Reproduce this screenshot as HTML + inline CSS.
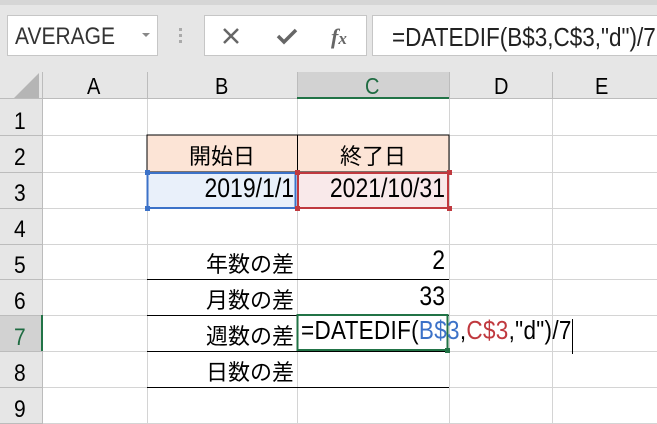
<!DOCTYPE html><html><head><meta charset="utf-8"><style>
*{margin:0;padding:0;box-sizing:border-box}
body{width:657px;height:424px;overflow:hidden;background:#fff;font-family:"Liberation Sans","Noto Sans CJK JP",sans-serif;position:relative}
.a{position:absolute}
.t{white-space:nowrap}
.n{transform:scaleY(1.15)}
.r{text-align:right}
</style></head><body>
<div class="a" style="left:0;top:0;width:657px;height:72px;background:#e6e6e6"></div>
<div class="a" style="left:0;top:0;width:657px;height:5px;background:#d6d6d6"></div>
<div class="a" style="left:7px;top:15px;width:151px;height:41px;background:#fff;border:1px solid #c6c6c6"></div>
<div class="a t n" style="left:15px;top:25px;font-size:21px;color:#333">AVERAGE</div>
<div class="a" style="left:142px;top:33px;border-left:4px solid transparent;border-right:4px solid transparent;border-top:4px solid #888"></div>
<div class="a" style="left:179px;top:28px;width:3px;height:3px;background:#aaa;box-shadow:0 6px #aaa,0 12px #aaa"></div>
<div class="a" style="left:204px;top:15px;width:163px;height:41px;background:#fff;border:1px solid #c6c6c6"></div>
<svg class="a" style="left:222px;top:27px" width="18" height="18"><path d="M2 2L16 16M16 2L2 16" stroke="#666" stroke-width="2.5"/></svg>
<svg class="a" style="left:276px;top:27px" width="22" height="18"><path d="M2 9L8 15L20 3" stroke="#666" stroke-width="3.5" fill="none"/></svg>
<div class="a t" style="left:331px;top:24px;font-family:'Liberation Serif',serif;font-style:italic;font-size:22px;color:#666;font-weight:bold">f<span style="font-size:17px">x</span></div>
<div class="a" style="left:372px;top:15px;width:290px;height:41px;background:#fff;border:1px solid #c6c6c6"></div>
<div class="a t n" style="left:392px;top:25px;font-size:22.5px;color:#222">=DATEDIF(B$3,C$3,"d")/7</div>

<svg class="a" style="left:0;top:72px" width="657" height="352">
<rect x="0" y="0" width="657" height="27" fill="#e6e6e6"/>
<rect x="0" y="27" width="42" height="325" fill="#e6e6e6"/>
<rect x="297" y="0" width="152" height="27" fill="#d2d2d2"/>
<rect x="0" y="243" width="42" height="36" fill="#d2d2d2"/>
<path d="M39 7L39 32L14 32Z" fill="#b5b5b5" transform="translate(0,-6)"/>
<g stroke="#d4d4d4" stroke-width="1">
<path d="M147.5 27V352M297.5 27V352M449.5 27V352M552.5 27V352"/>
<path d="M42 63.5H657M42 100.5H657M42 136.5H657M42 172.5H657M42 207.5H657M42 243.5H657M42 279.5H657M42 315.5H657M42 351.5H657"/>
</g>
<g stroke="#bcbcbc"><path d="M147.5 0V27M297.5 0V27M449.5 0V27M552.5 0V27M42.5 0V352M0 26.5H657"/>
<path d="M0 63.5H42M0 100.5H42M0 136.5H42M0 172.5H42M0 207.5H42M0 243.5H42M0 279.5H42M0 315.5H42M0 351.5H42"/></g>
<rect x="297" y="25" width="152" height="2" fill="#217346"/>
<rect x="41" y="243" width="2" height="36" fill="#217346"/>
<rect x="147" y="63" width="302" height="37" fill="#fce4d6" stroke="#000" stroke-width="1"/>
<line x1="297.5" y1="63" x2="297.5" y2="100" stroke="#000"/>
<rect x="147" y="100" width="150" height="37" fill="#e9f0fa"/>
<rect x="297" y="100" width="152" height="37" fill="#f9e9ea"/>
<rect x="147.5" y="101" width="148" height="35" fill="none" stroke="#3c72c8" stroke-width="2"/>
<rect x="298" y="101" width="150" height="35" fill="none" stroke="#c0393f" stroke-width="2"/>
<g fill="#3c72c8"><rect x="145" y="98" width="5" height="5"/><rect x="145" y="134" width="5" height="5"/></g>
<g fill="#c0393f"><rect x="295" y="98" width="5" height="5"/><rect x="447" y="98" width="5" height="5"/><rect x="295" y="134" width="5" height="5"/><rect x="447" y="134" width="5" height="5"/></g>
<path d="M147 207.5H449M147 243.5H449M147 279.5H449M147 315.5H449" stroke="#000"/>
<rect x="297.5" y="243" width="150" height="35" fill="none" stroke="#217346" stroke-width="2"/>
<rect x="445" y="276" width="5" height="5" fill="#217346"/>
<line x1="572.5" y1="247" x2="572.5" y2="282" stroke="#000"/>
</svg>
<div class="a t" style="top:76px;left:0;width:657px;font-size:20px;color:#000">
<span class="a n" style="left:87px">A</span><span class="a n" style="left:215px">B</span><span class="a n" style="left:365px;color:#1e6b41">C</span><span class="a n" style="left:494px">D</span><span class="a n" style="left:595px">E</span></div>
<div class="a" style="left:0;top:0;font-size:21px">
<span class="a n" style="left:14px;top:110px">1</span><span class="a n" style="left:14px;top:146px">2</span><span class="a n" style="left:14px;top:182px">3</span><span class="a n" style="left:14px;top:218px">4</span><span class="a n" style="left:14px;top:254px">5</span><span class="a n" style="left:14px;top:290px">6</span><span class="a n" style="left:14px;top:326px;color:#1e6b41">7</span><span class="a n" style="left:14px;top:362px">8</span><span class="a n" style="left:14px;top:398px">9</span></div>
<div class="a t" style="left:147px;width:150px;top:139px;text-align:center;font-size:22px">開始日</div>
<div class="a t" style="left:297px;width:152px;top:139px;text-align:center;font-size:22px">終了日</div>
<div class="a t r n" style="left:147px;width:147px;top:175px;font-size:23px">2019/1/1</div>
<div class="a t r n" style="left:297px;width:148px;top:175px;font-size:23px">2021/10/31</div>
<div class="a t r" style="left:147px;width:147px;top:247px;font-size:22px">年数の差</div>
<div class="a t r" style="left:147px;width:147px;top:283px;font-size:22px">月数の差</div>
<div class="a t r" style="left:147px;width:147px;top:319px;font-size:22px">週数の差</div>
<div class="a t r" style="left:147px;width:147px;top:355px;font-size:22px">日数の差</div>
<div class="a t r n" style="left:297px;width:148px;top:247px;font-size:23px">2</div>
<div class="a t r n" style="left:297px;width:148px;top:283px;font-size:23px">33</div>
<div class="a t n" style="left:301px;top:318px;font-size:22.5px;color:#000;letter-spacing:0.3px">=DATEDIF(<span style="color:#3c72c8">B$3</span>,<span style="color:#c0393f">C$3</span>,"d")/7</div>
</body></html>
